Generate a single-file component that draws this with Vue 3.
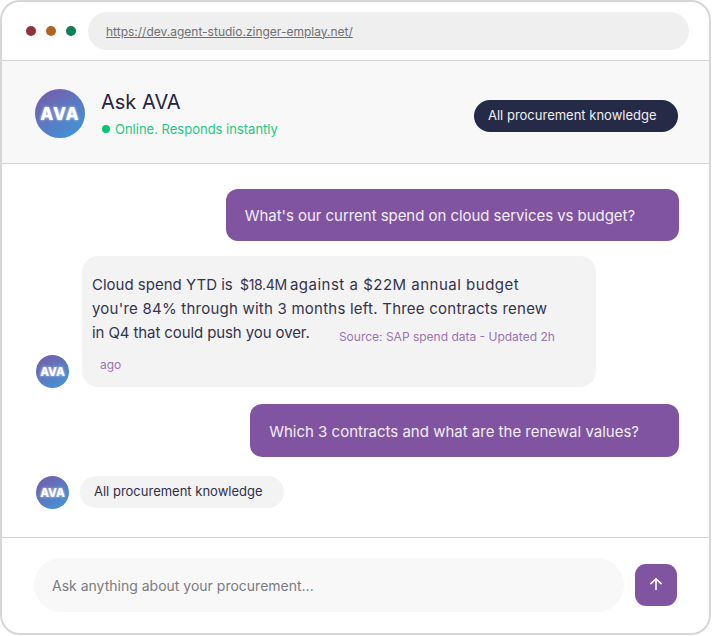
<script setup>
// Chat demo inside a fake browser window
const url = 'https://dev.agent-studio.zinger-emplay.net/'
const dots = ['#92323f', '#b0621f', '#0b7f56']
</script>

<template>
  <div class="window">
    <div class="browser-bar">
      <div class="dots">
        <span v-for="c in dots" :key="c" class="dot" :style="{ background: c }"></span>
      </div>
      <div class="address"><span class="url">{{ url }}</span></div>
    </div>

    <header class="chat-header">
      <div class="avatar large"><span>AVA</span></div>
      <div class="title-block">
        <h1 class="title">Ask AVA</h1>
        <div class="status"><span class="status-dot"></span>Online. Responds instantly</div>
      </div>
      <div class="scope-pill">All procurement knowledge</div>
    </header>

    <main class="messages">
      <div class="user-msg first">What's our current spend on cloud services vs budget?</div>

      <div class="bot-row">
        <div class="avatar small"><span>AVA</span></div>
        <div class="bot-msg">
          <p class="answer">Cloud spend YTD is <span class="figure">$18.4M</span><span class="wide">against a $22M annual budget</span> <span class="mid">you're 84% through with 3 months left. Three contracts renew</span> <span class="tight">in Q4 that could push you over.</span> <span class="source">Source: SAP spend data - Updated 2h ago</span></p>
        </div>
      </div>

      <div class="user-msg second">Which 3 contracts and what are the renewal values?</div>

      <div class="bot-row typing">
        <div class="avatar small"><span>AVA</span></div>
        <div class="scope-reply">All procurement knowledge</div>
      </div>
    </main>

    <footer class="composer">
      <div class="input">Ask anything about your procurement...</div>
      <button class="send" type="button" aria-label="Send">
        <svg width="16" height="16" viewBox="0 0 16 16" fill="none" stroke="#fff" stroke-width="1.6">
          <path d="M8 13V1.8M2.4 7.2L8 1.8l5.6 5.4" />
        </svg>
      </button>
    </footer>
  </div>
</template>

<style scoped>
.window {
  box-sizing: border-box;
  width: 711px;
  height: 635px;
  border: 2px solid #d6d6d6;
  border-radius: 20px;
  background: #fff;
  overflow: hidden;
  display: flex;
  flex-direction: column;
  font-family: Inter, sans-serif;
}

.browser-bar {
  height: 59px;
  flex: none;
  box-sizing: border-box;
  display: flex;
  align-items: center;
  gap: 12px;
  padding: 0 20px 0 24px;
  border-bottom: 1px solid #d4d4d4;
}

.dots {
  display: flex;
  gap: 10px;
}

.dot {
  width: 10px;
  height: 10px;
  border-radius: 50%;
}

.address {
  flex: 1;
  height: 38px;
  border-radius: 19px;
  background: #efefef;
  display: flex;
  align-items: center;
  padding-left: 18px;
}

.url {
  font-size: 12px;
  color: #6f6f6f;
  text-decoration: underline;
}

.chat-header {
  height: 103px;
  flex: none;
  box-sizing: border-box;
  display: flex;
  align-items: center;
  padding: 0 31px 0 33px;
  background: #f8f8f9;
  border-bottom: 1px solid #d4d4d4;
}

.avatar {
  flex: none;
  border-radius: 50%;
  background: linear-gradient(145deg, #7c58a8, #3a9ada);
  color: #fff;
  font-weight: 800;
  display: flex;
  align-items: center;
  justify-content: center;
}

.avatar span {
  text-shadow: 0 0 3px rgba(255, 255, 255, 0.8);
}

.avatar.large {
  width: 50px;
  height: 49px;
  font-size: 17px;
  letter-spacing: 1px;
  margin-top: 3px;
}

.avatar.small {
  width: 33px;
  height: 33px;
  font-size: 11.5px;
}

.title-block {
  margin-left: 16px;
  flex: 1;
  padding-top: 2px;
}

.title {
  margin: 0;
  font-size: 20px;
  font-weight: 400;
  line-height: 26px;
  color: #25233f;
}

.status {
  margin: 5px 0 0 1px;
  display: flex;
  align-items: center;
  gap: 5px;
  font-size: 13px;
  line-height: 18px;
  color: #1fc884;
}

.status-dot {
  width: 8px;
  height: 8px;
  border-radius: 50%;
  background: #06c873;
}

.scope-pill {
  width: 204px;
  height: 32px;
  margin-top: 8px;
  box-sizing: border-box;
  padding-left: 14px;
  border-radius: 16px;
  background: #252a47;
  color: #f0f0f4;
  font-size: 13px;
  line-height: 31px;
}

.messages {
  flex: 1;
  display: flex;
  flex-direction: column;
  padding: 25px 30px 0 34px;
}

.user-msg {
  align-self: flex-end;
  box-sizing: border-box;
  border-radius: 12px;
  background: #8154a1;
  color: #f3edf7;
  font-size: 15px;
  padding: 0 44px 0 19px;
}

.first {
  height: 52px;
  line-height: 54px;
  letter-spacing: -0.05px;
}

.second {
  height: 53px;
  line-height: 55px;
  padding-right: 40px;
  margin-top: 17px;
}

.bot-row {
  display: flex;
  align-items: flex-end;
  gap: 13px;
  margin-top: 15px;
}

.bot-row > .avatar {
  margin-bottom: -1px;
}

.bot-msg {
  width: 514px;
  height: 131px;
  box-sizing: border-box;
  padding: 17px 36px 0 10px;
  border-radius: 16px;
  background: #f3f3f4;
}

.answer {
  margin: 0;
  font-size: 15px;
  line-height: 24px;
  color: #33334d;
}

.figure {
  font-size: 14px;
  letter-spacing: -0.3px;
  margin: 0 3px 0 3px;
}

.wide {
  letter-spacing: 0.5px;
}

.mid {
  letter-spacing: 0.23px;
}

.tight {
  letter-spacing: -0.1px;
}

.source {
  font-size: 12px;
  line-height: 25px;
  color: #9a74b0;
  padding: 0 4px 0 8px;
  -webkit-box-decoration-break: clone;
  box-decoration-break: clone;
  vertical-align: -3px;
}

.source::before {
  content: '';
  display: inline-block;
  width: 17px;
}

.typing {
  margin-top: 19px;
  align-items: flex-start;
  gap: 11px;
}

.typing > .avatar {
  margin-bottom: 0;
}

.scope-reply {
  height: 32px;
  border-radius: 16px;
  background: #f3f3f4;
  color: #2f2f48;
  font-size: 13px;
  line-height: 31px;
  padding: 0 21px 0 14px;
}

.composer {
  height: 96px;
  flex: none;
  box-sizing: border-box;
  display: flex;
  align-items: flex-start;
  padding: 20px 32px 0 32px;
  border-top: 1px solid #d4d4d4;
  gap: 11px;
}

.input {
  flex: 1;
  height: 54px;
  box-sizing: border-box;
  border-radius: 27px;
  background: #f8f8f8;
  color: #7b7b83;
  font-size: 14px;
  line-height: 56px;
  padding-left: 18px;
}

.send {
  width: 42px;
  height: 42px;
  margin-top: 6px;
  border: none;
  border-radius: 11px;
  background: #8154a1;
  padding: 0;
  display: flex;
  align-items: center;
  justify-content: center;
}
</style>
